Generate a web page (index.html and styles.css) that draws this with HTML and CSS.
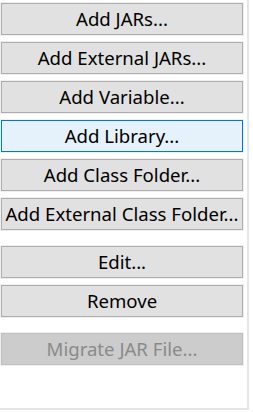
FILE: index.html
```html
<!DOCTYPE html>
<html>
<head>
<meta charset="utf-8">
<link rel="stylesheet" href="styles.css">
</head>
<body>
<div class="panel">
  <div class="group">
    <button class="btn">Add JARs...</button>
    <button class="btn">Add External JARs...</button>
    <button class="btn">Add Variable...</button>
    <button class="btn focused">Add Library...</button>
    <button class="btn">Add Class Folder...</button>
    <button class="btn">Add External Class Folder...</button>
  </div>
  <div class="group">
    <button class="btn">Edit...</button>
    <button class="btn">Remove</button>
  </div>
  <div class="group">
    <button class="btn disabled" disabled>Migrate JAR File...</button>
  </div>
</div>
</body>
</html>
```

FILE: styles.css
```css
html, body {
  margin: 0;
  padding: 0;
  background: #ffffff;
}
.panel {
  width: 249px;
  height: 410px;
  box-sizing: border-box;
  border-right: 2px solid #e6e6e6;
  border-bottom: 2px solid #e6e6e6;
  padding: 3px 0 0 1px;
  display: flex;
  flex-direction: column;
  gap: 16px;
}
.group {
  display: flex;
  flex-direction: column;
  gap: 7px;
}
.btn {
  width: 242px;
  height: 32px;
  box-sizing: border-box;
  margin: 0;
  padding: 0;
  border: 1px solid #adadad;
  background: #e1e1e1;
  box-shadow: 0 0 0 1px #f0f0f0;
  font-family: "Noto Sans", "Open Sans", sans-serif;
  font-size: 18.6px;
  color: #000000;
  text-align: center;
  white-space: nowrap;
  line-height: 28px;
}
.focused {
  border-color: #0078d7;
  background: #e5f1fb;
}
.disabled {
  border-color: #bfbfbf;
  background: #cccccc;
  color: #8a8a8a;
}
```
